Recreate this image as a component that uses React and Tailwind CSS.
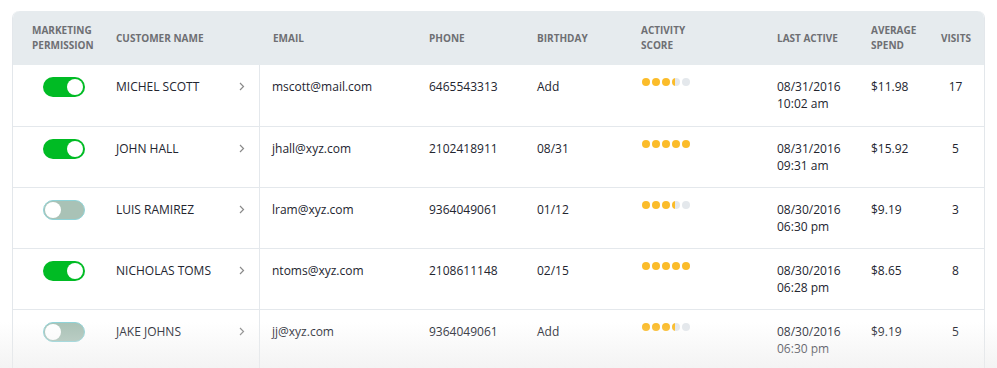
import React from "react";

const rows = [
  { on: true, name: "MICHEL SCOTT", email: "mscott@mail.com", phone: "6465543313", bday: "Add", score: 3.35, date: "08/31/2016", time: "10:02 am", spend: "$11.98", visits: "17" },
  { on: true, name: "JOHN HALL", email: "jhall@xyz.com", phone: "2102418911", bday: "08/31", score: 5, date: "08/31/2016", time: "09:31 am", spend: "$15.92", visits: "5" },
  { on: false, name: "LUIS RAMIREZ", email: "lram@xyz.com", phone: "9364049061", bday: "01/12", score: 3.35, date: "08/30/2016", time: "06:30 pm", spend: "$9.19", visits: "3" },
  { on: true, name: "NICHOLAS TOMS", email: "ntoms@xyz.com", phone: "2108611148", bday: "02/15", score: 5, date: "08/30/2016", time: "06:28 pm", spend: "$8.65", visits: "8" },
  { on: false, name: "JAKE JOHNS", email: "jj@xyz.com", phone: "9364049061", bday: "Add", score: 3.35, date: "08/30/2016", time: "06:30 pm", spend: "$9.19", visits: "5" },
];

const cols = "grid grid-cols-[91px_156px_157px_108px_104px_136px_94px_70px_1fr]";

function Toggle({ on }) {
  return on ? (
    <div className="w-[42px] h-[20px] rounded-full bg-[#00bb24] flex items-center justify-end pr-[2px]">
      <div className="w-[16px] h-[16px] rounded-full bg-white" />
    </div>
  ) : (
    <div className="w-[42px] h-[20px] rounded-full bg-[#a9c2b6] border border-[#8fd3d8] flex items-center justify-start pl-[1px]">
      <div className="w-[16px] h-[16px] rounded-full bg-white" />
    </div>
  );
}

function Dots({ score }) {
  const items = [];
  for (let i = 0; i < 5; i++) {
    const f = Math.max(0, Math.min(1, score - i));
    let bg;
    if (f >= 1) bg = "#fbbc2a";
    else if (f <= 0) bg = "#e4e8ec";
    else bg = `linear-gradient(to right, #fbbc2a ${f * 100}%, #e4e8ec ${f * 100}%)`;
    items.push(<div key={i} className="w-[8px] h-[8px] rounded-full" style={{ background: bg }} />);
  }
  return <div className="flex gap-[2px]">{items}</div>;
}

function Head({ children, className = "" }) {
  return (
    <div className={"flex items-center text-[10px] leading-[15px] font-bold uppercase text-[#6e6f73] " + className}>
      <div>{children}</div>
    </div>
  );
}

export default function App() {
  return (
    <div className="relative w-[997px] h-[368px] overflow-hidden bg-white pt-[11px] pl-[12px] pr-[12px]" style={{ fontFamily: '"Open Sans", "Noto Sans", sans-serif' }}>
      <div className="w-[973px] rounded-t-[7px] border-x border-[#e3e7eb] text-[#23252f]">
        <div className={cols + " h-[54px] bg-[#e6ebee] rounded-t-[7px]"}>
          <Head className="pl-[19px]">Marketing<br />Permission</Head>
          <Head className="pl-[12px]">Customer Name</Head>
          <Head className="pl-[13px]">Email</Head>
          <Head className="pl-[12px]">Phone</Head>
          <Head className="pl-[12px]">Birthday</Head>
          <Head className="pl-[12px]">Activity<br />Score</Head>
          <Head className="pl-[12px]">Last Active</Head>
          <Head className="pl-[12px]">Average<br />Spend</Head>
          <Head className="pl-[12px]">Visits</Head>
        </div>
        {rows.map((r, i) => (
          <div key={i} className={cols + " h-[61px] text-[12px] leading-[17px] " + (i > 0 ? "border-t border-[#e4e8ec]" : "")}>
            <div className="pl-[30px] pt-[12px]"><Toggle on={r.on} /></div>
            <div className="pl-[12px] pr-[14px] pt-[13px] flex justify-between items-start border-r border-[#e4e8ec]">
              <span>{r.name}</span>
              <svg width="6" height="9" viewBox="0 0 6 9" className="mt-[4px]">
                <polyline points="1,1 4.5,4.5 1,8" fill="none" stroke="#8a8a8a" strokeWidth="1.2" />
              </svg>
            </div>
            <div className="pl-[12px] pt-[13px]">{r.email}</div>
            <div className="pl-[12px] pt-[13px]">{r.phone}</div>
            <div className="pl-[12px] pt-[13px]">{r.bday}</div>
            <div className="pl-[13px] pt-[13px]"><Dots score={r.score} /></div>
            <div className="pl-[12px] pt-[13px]">{r.date}<br />{r.time}</div>
            <div className="pl-[12px] pt-[13px]">{r.spend}</div>
            <div className="pt-[13px] text-center pr-[2px]">{r.visits}</div>
          </div>
        ))}
      </div>
      <div className="absolute left-0 right-0 bottom-0 h-[46px] pointer-events-none bg-gradient-to-b from-[rgba(255,255,255,0)] to-[rgba(236,236,236,0.6)]" />
    </div>
  );
}
